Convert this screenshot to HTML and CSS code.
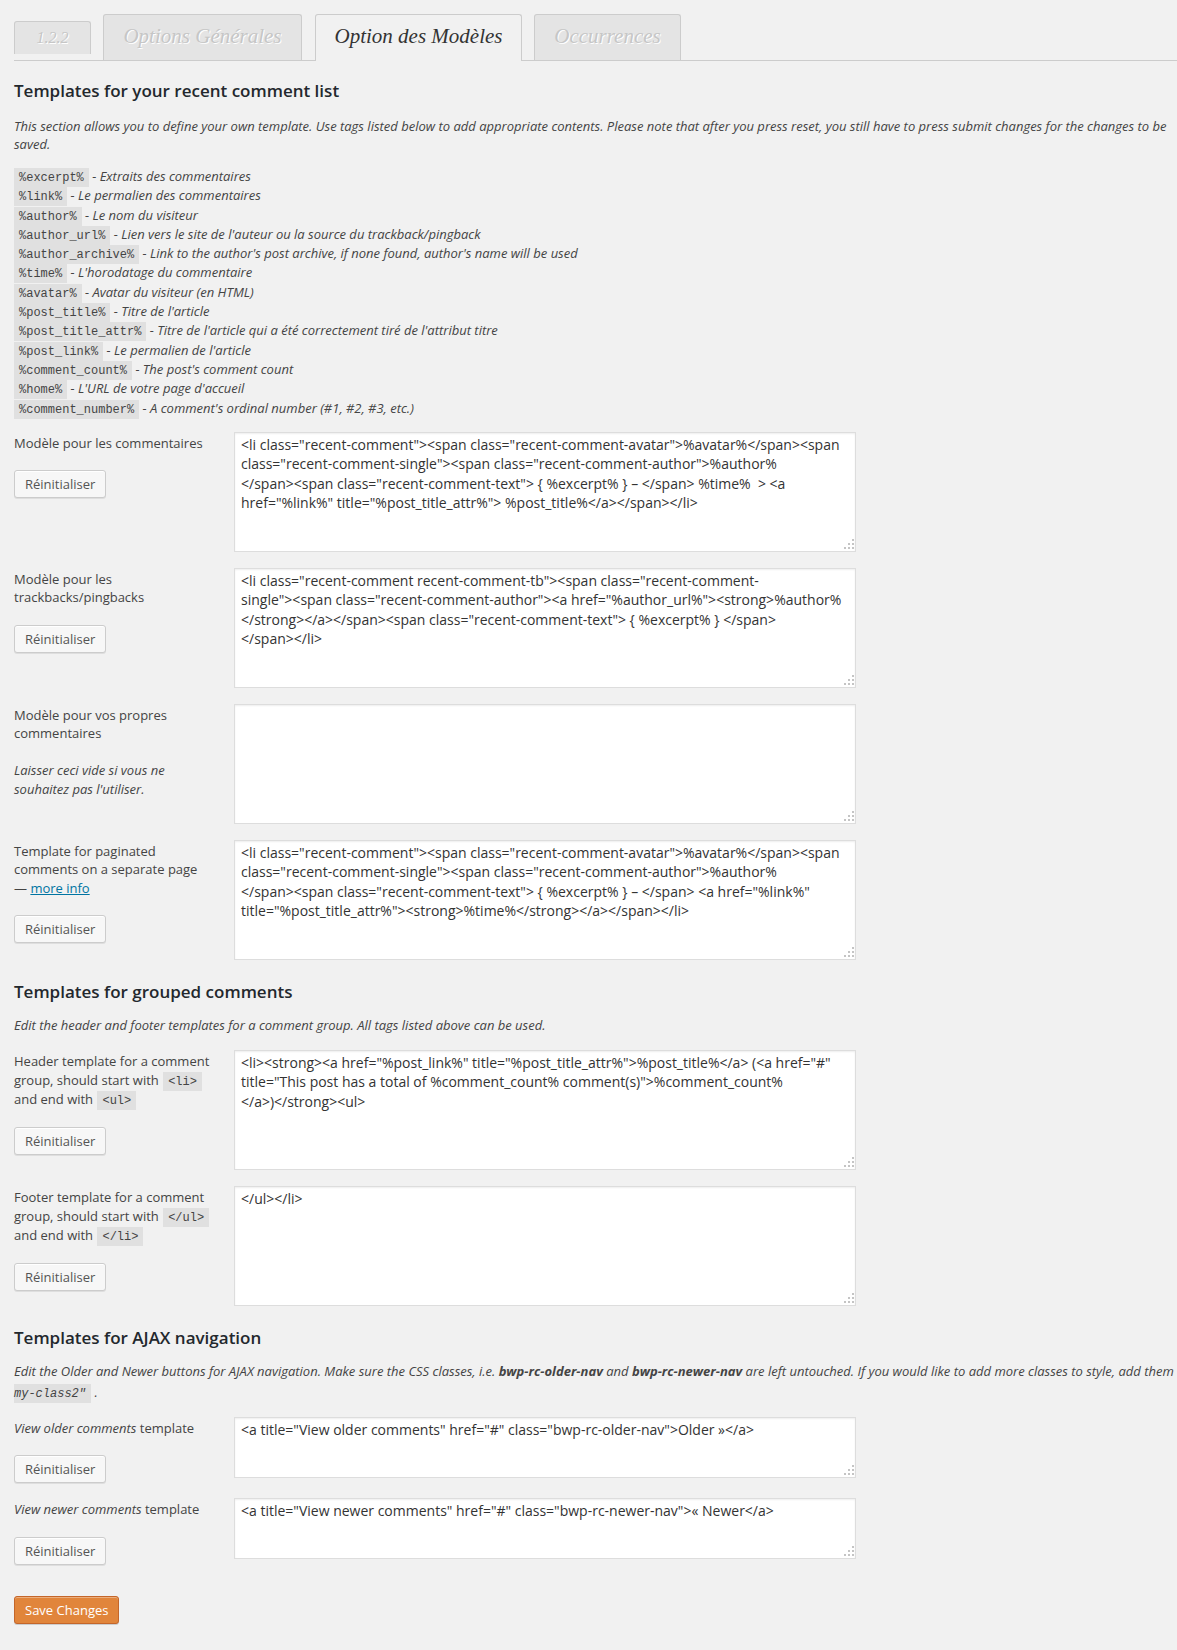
FILE: index.html
```html
<!DOCTYPE html>
<html lang="fr">
<head>
<meta charset="utf-8">
<title>Option des Modèles</title>
<link rel="stylesheet" href="styles.css">
</head>
<body>
<div class="wrap">
  <div class="tabs">
    <div class="tab tab-ver">1.2.2</div>
    <div class="tab tab-gen">Options Générales</div>
    <div class="tab tab-tpl active">Option des Modèles</div>
    <div class="tab tab-occ">Occurrences</div>
  </div>

  <h3 class="h-first">Templates for your recent comment list</h3>
  <p class="desc d-first">This section allows you to define your own template. Use tags listed below to add appropriate contents. Please note that after you press reset, you still have to press submit changes for the changes to be saved.</p>

  <div class="tags">
    <div class="tag"><code>%excerpt%</code> <em>- Extraits des commentaires</em></div>
    <div class="tag"><code>%link%</code> <em>- Le permalien des commentaires</em></div>
    <div class="tag"><code>%author%</code> <em>- Le nom du visiteur</em></div>
    <div class="tag"><code>%author_url%</code> <em>- Lien vers le site de l'auteur ou la source du trackback/pingback</em></div>
    <div class="tag"><code>%author_archive%</code> <em>- Link to the author's post archive, if none found, author's name will be used</em></div>
    <div class="tag"><code>%time%</code> <em>- L'horodatage du commentaire</em></div>
    <div class="tag"><code>%avatar%</code> <em>- Avatar du visiteur (en HTML)</em></div>
    <div class="tag"><code>%post_title%</code> <em>- Titre de l'article</em></div>
    <div class="tag"><code>%post_title_attr%</code> <em>- Titre de l'article qui a été correctement tiré de l'attribut titre</em></div>
    <div class="tag"><code>%post_link%</code> <em>- Le permalien de l'article</em></div>
    <div class="tag"><code>%comment_count%</code> <em>- The post's comment count</em></div>
    <div class="tag"><code>%home%</code> <em>- L'URL de votre page d'accueil</em></div>
    <div class="tag"><code>%comment_number%</code> <em>- A comment's ordinal number (#1, #2, #3, etc.)</em></div>
  </div>

  <div class="rows rows-first">
    <div class="row">
      <div class="label">
        <div>Modèle pour les commentaires</div>
        <button class="button btn-reset">Réinitialiser</button>
      </div>
      <div class="ta-wrap">
        <textarea class="ta">&lt;li class="recent-comment"&gt;&lt;span class="recent-comment-avatar"&gt;%avatar%&lt;/span&gt;&lt;span class="recent-comment-single"&gt;&lt;span class="recent-comment-author"&gt;%author%
&lt;/span&gt;&lt;span class="recent-comment-text"&gt; { %excerpt% } – &lt;/span&gt; %time%  &gt; &lt;a href="%link%" title="%post_title_attr%"&gt; %post_title%&lt;/a&gt;&lt;/span&gt;&lt;/li&gt;</textarea>
        <svg class="grip" width="11" height="11" viewBox="0 0 11 11"><rect x="9" y="0" width="2" height="2"/><rect x="5" y="4" width="2" height="2"/><rect x="9" y="4" width="2" height="2"/><rect x="1" y="8" width="2" height="2"/><rect x="5" y="8" width="2" height="2"/><rect x="9" y="8" width="2" height="2"/></svg>
      </div>
    </div>

    <div class="row">
      <div class="label">
        <div>Modèle pour les trackbacks/pingbacks</div>
        <button class="button btn-reset">Réinitialiser</button>
      </div>
      <div class="ta-wrap">
        <textarea class="ta">&lt;li class="recent-comment recent-comment-tb"&gt;&lt;span class="recent-comment-
single"&gt;&lt;span class="recent-comment-author"&gt;&lt;a href="%author_url%"&gt;&lt;strong&gt;%author%
&lt;/strong&gt;&lt;/a&gt;&lt;/span&gt;&lt;span class="recent-comment-text"&gt; { %excerpt% } &lt;/span&gt;
&lt;/span&gt;&lt;/li&gt;</textarea>
        <svg class="grip" width="11" height="11" viewBox="0 0 11 11"><rect x="9" y="0" width="2" height="2"/><rect x="5" y="4" width="2" height="2"/><rect x="9" y="4" width="2" height="2"/><rect x="1" y="8" width="2" height="2"/><rect x="5" y="8" width="2" height="2"/><rect x="9" y="8" width="2" height="2"/></svg>
      </div>
    </div>

    <div class="row">
      <div class="label">
        <div>Modèle pour vos propres commentaires</div>
        <div class="note">Laisser ceci vide si vous ne souhaitez pas l'utiliser.</div>
      </div>
      <div class="ta-wrap">
        <textarea class="ta"></textarea>
        <svg class="grip" width="11" height="11" viewBox="0 0 11 11"><rect x="9" y="0" width="2" height="2"/><rect x="5" y="4" width="2" height="2"/><rect x="9" y="4" width="2" height="2"/><rect x="1" y="8" width="2" height="2"/><rect x="5" y="8" width="2" height="2"/><rect x="9" y="8" width="2" height="2"/></svg>
      </div>
    </div>

    <div class="row">
      <div class="label">
        <div>Template for paginated comments on a separate page<br>— <a href="#" class="link">more info</a></div>
        <button class="button btn-reset">Réinitialiser</button>
      </div>
      <div class="ta-wrap">
        <textarea class="ta">&lt;li class="recent-comment"&gt;&lt;span class="recent-comment-avatar"&gt;%avatar%&lt;/span&gt;&lt;span class="recent-comment-single"&gt;&lt;span class="recent-comment-author"&gt;%author%
&lt;/span&gt;&lt;span class="recent-comment-text"&gt; { %excerpt% } – &lt;/span&gt; &lt;a href="%link%" title="%post_title_attr%"&gt;&lt;strong&gt;%time%&lt;/strong&gt;&lt;/a&gt;&lt;/span&gt;&lt;/li&gt;</textarea>
        <svg class="grip" width="11" height="11" viewBox="0 0 11 11"><rect x="9" y="0" width="2" height="2"/><rect x="5" y="4" width="2" height="2"/><rect x="9" y="4" width="2" height="2"/><rect x="1" y="8" width="2" height="2"/><rect x="5" y="8" width="2" height="2"/><rect x="9" y="8" width="2" height="2"/></svg>
      </div>
    </div>
  </div>

  <h3 class="h-section">Templates for grouped comments</h3>
  <p class="desc d-group">Edit the header and footer templates for a comment group. All tags listed above can be used.</p>

  <div class="rows rows-group">
    <div class="row">
      <div class="label label-code">
        <div>Header template for a comment group, should start with <code>&lt;li&gt;</code> and end with <code>&lt;ul&gt;</code></div>
        <button class="button btn-reset">Réinitialiser</button>
      </div>
      <div class="ta-wrap">
        <textarea class="ta">&lt;li&gt;&lt;strong&gt;&lt;a href="%post_link%" title="%post_title_attr%"&gt;%post_title%&lt;/a&gt; (&lt;a href="#" title="This post has a total of %comment_count% comment(s)"&gt;%comment_count%
&lt;/a&gt;)&lt;/strong&gt;&lt;ul&gt;</textarea>
        <svg class="grip" width="11" height="11" viewBox="0 0 11 11"><rect x="9" y="0" width="2" height="2"/><rect x="5" y="4" width="2" height="2"/><rect x="9" y="4" width="2" height="2"/><rect x="1" y="8" width="2" height="2"/><rect x="5" y="8" width="2" height="2"/><rect x="9" y="8" width="2" height="2"/></svg>
      </div>
    </div>

    <div class="row">
      <div class="label label-code">
        <div>Footer template for a comment group, should start with <code>&lt;/ul&gt;</code> and end with <code>&lt;/li&gt;</code></div>
        <button class="button btn-reset">Réinitialiser</button>
      </div>
      <div class="ta-wrap">
        <textarea class="ta">&lt;/ul&gt;&lt;/li&gt;</textarea>
        <svg class="grip" width="11" height="11" viewBox="0 0 11 11"><rect x="9" y="0" width="2" height="2"/><rect x="5" y="4" width="2" height="2"/><rect x="9" y="4" width="2" height="2"/><rect x="1" y="8" width="2" height="2"/><rect x="5" y="8" width="2" height="2"/><rect x="9" y="8" width="2" height="2"/></svg>
      </div>
    </div>
  </div>

  <h3 class="h-section">Templates for AJAX navigation</h3>
  <p class="desc d-ajax">Edit the Older and Newer buttons for AJAX navigation. Make sure the CSS classes, i.e. <strong>bwp-rc-older-nav</strong> and <strong>bwp-rc-newer-nav</strong> are left untouched. If you would like to add more classes to style, add them like this: <code>class="bwp-rc-older-nav my-class<br>my-class2"</code> .</p>

  <div class="rows rows-ajax">
    <div class="row row-small">
      <div class="label">
        <div><em>View older comments</em> template</div>
        <button class="button btn-reset">Réinitialiser</button>
      </div>
      <div class="ta-wrap">
        <textarea class="ta ta-small">&lt;a title="View older comments" href="#" class="bwp-rc-older-nav"&gt;Older »&lt;/a&gt;</textarea>
        <svg class="grip" width="11" height="11" viewBox="0 0 11 11"><rect x="9" y="0" width="2" height="2"/><rect x="5" y="4" width="2" height="2"/><rect x="9" y="4" width="2" height="2"/><rect x="1" y="8" width="2" height="2"/><rect x="5" y="8" width="2" height="2"/><rect x="9" y="8" width="2" height="2"/></svg>
      </div>
    </div>

    <div class="row row-small">
      <div class="label">
        <div><em>View newer comments</em> template</div>
        <button class="button btn-reset">Réinitialiser</button>
      </div>
      <div class="ta-wrap">
        <textarea class="ta ta-small">&lt;a title="View newer comments" href="#" class="bwp-rc-newer-nav"&gt;« Newer&lt;/a&gt;</textarea>
        <svg class="grip" width="11" height="11" viewBox="0 0 11 11"><rect x="9" y="0" width="2" height="2"/><rect x="5" y="4" width="2" height="2"/><rect x="9" y="4" width="2" height="2"/><rect x="1" y="8" width="2" height="2"/><rect x="5" y="8" width="2" height="2"/><rect x="9" y="8" width="2" height="2"/></svg>
      </div>
    </div>
  </div>

  <div class="submit">
    <button class="button button-primary">Save Changes</button>
  </div>
</div>
</body>
</html>
```

FILE: styles.css
```css
html, body {
  margin: 0;
  padding: 0;
  background: #f1f1f1;
}

body {
  font-family: "Open Sans", "Liberation Sans", sans-serif;
  font-size: 13px;
  color: #444;
  overflow-x: hidden;
  height: 1650px;
}

.wrap {
  width: 1175px;
  padding-left: 14px;
}

/* Tabs */
.tabs {
  display: flex;
  align-items: flex-start;
  height: 46px;
  padding-top: 14px;
  border-bottom: 1px solid #ccc;
}

.tab {
  box-sizing: border-box;
  height: 46px;
  margin-right: 12px;
  border: 1px solid #ccc;
  border-bottom: none;
  border-radius: 3px 3px 0 0;
  background: #e4e4e4;
  font-family: "Liberation Serif", "DejaVu Serif", serif;
  font-style: italic;
  font-size: 21px;
  line-height: 42px;
  color: #c6c6c6;
  text-shadow: 1px 1px 0 #fff;
  text-align: center;
  white-space: nowrap;
}

.tab-ver {
  width: 77px;
  height: 33px;
  margin-top: 7px;
  font-size: 16px;
  line-height: 31px;
}

.tab-gen {
  width: 199px;
  margin-right: 13px;
}

.tab-tpl {
  width: 207px;
}

.tab-occ {
  width: 147px;
}

.tab.active {
  height: 47px;
  background: #f1f1f1;
  color: #333;
  text-shadow: none;
}

/* Headings & descriptions */
h3 {
  margin: 0;
  font-size: 17px;
  font-weight: 600;
  line-height: 24px;
  color: #23282d;
}

.h-first {
  margin-top: 18px;
}

.h-section {
  margin-top: 20px;
}

.desc {
  margin: 0;
  font-style: italic;
  line-height: 18px;
}

.d-first {
  margin-top: 14px;
}

.d-group {
  margin-top: 12px;
}

.d-ajax {
  margin-top: 11px;
  line-height: 21px;
  white-space: nowrap;
}

code {
  font-family: "Liberation Mono", "DejaVu Sans Mono", monospace;
  font-size: 12px;
  line-height: 12px;
  padding: 3px 5px 2px;
  margin: 0 1px;
  background: rgba(0, 0, 0, 0.07);
  color: #444;
}

.d-ajax code {
  font-style: italic;
  margin: 0;
}

/* Tag list */
.tags {
  margin-top: 14px;
  line-height: 19.3px;
}

.tag code {
  margin: 0;
}

.tag em {
  font-style: italic;
}

/* Form rows */
.rows-first {
  margin-top: 14px;
}

.rows-group {
  margin-top: 16px;
}

.rows-ajax {
  margin-top: 14px;
}

.row {
  display: grid;
  grid-template-columns: 200px 622px;
  column-gap: 20px;
  align-items: start;
  margin-bottom: 16px;
}

.row:last-child {
  margin-bottom: 0;
}

.row-small {
  margin-bottom: 15px;
}

.label {
  padding-top: 2px;
  line-height: 18.5px;
}

.label-code {
  line-height: 19px;
}

.note {
  margin-top: 18.5px;
  font-style: italic;
}

.link {
  color: #0074a2;
  text-decoration: underline;
}

.button {
  display: inline-block;
  box-sizing: border-box;
  height: 28px;
  margin: 0;
  padding: 0 10px 1px;
  border: 1px solid #ccc;
  border-radius: 3px;
  background: #f7f7f7;
  box-shadow: inset 0 1px 0 #fff, 0 1px 0 rgba(0, 0, 0, 0.08);
  font-family: "Open Sans", "Liberation Sans", sans-serif;
  font-size: 13px;
  line-height: 26px;
  color: #555;
  cursor: pointer;
}

.btn-reset {
  display: block;
  margin-top: 18px;
}

.ta-wrap {
  position: relative;
  width: 622px;
}

.ta {
  display: block;
  box-sizing: border-box;
  width: 622px;
  height: 120px;
  margin: 0;
  padding: 2px 2px 2px 6px;
  border: 1px solid #ddd;
  background: #fff;
  box-shadow: inset 0 1px 2px rgba(0, 0, 0, 0.07);
  font-family: "Open Sans", "Liberation Sans", sans-serif;
  font-size: 14px;
  line-height: 19.5px;
  color: #333;
  resize: none;
  overflow: hidden;
}

.ta-small {
  height: 61px;
}

.grip {
  position: absolute;
  right: 2px;
  bottom: 2px;
  fill: #c4c4c4;
}

/* Submit */
.submit {
  margin-top: 31px;
}

.button-primary {
  height: 28px;
  border-color: #c4662a;
  background: #e1853b;
  box-shadow: inset 0 1px 0 #ebae7d, 0 1px 0 rgba(0, 0, 0, 0.15);
  color: #fff;
}
```
